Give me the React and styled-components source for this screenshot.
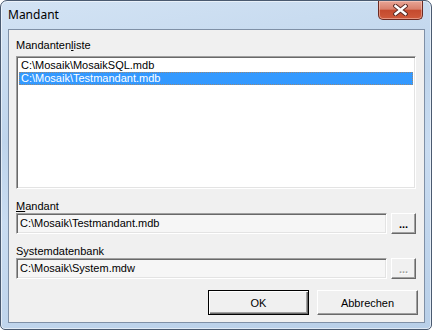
import React, { useState } from 'react';
import styled, { createGlobalStyle, css } from 'styled-components';

const GlobalStyle = createGlobalStyle`
  body {
    margin: 0;
    background: #ffffff;
    font-family: "Liberation Sans", Arial, sans-serif;
  }
`

const sunken = css`
  border: 1px solid;
  border-color: #a0a0a0 #ffffff #ffffff #a0a0a0;
  box-shadow: inset 1px 1px 0 #696969, inset -1px -1px 0 #e3e3e3;
`

const Window = styled.div`
  box-sizing: border-box;
  width: 432px;
  height: 330px;
  border: 1px solid #4a5a70;
  border-radius: 7px 7px 5px 5px;
  background: linear-gradient(170deg, #d3e3f4 0%, #bfd5ec 35%, #c9dcf1 55%, #b8cfe8 100%);
  box-shadow: inset 0 0 0 1px rgba(255, 255, 255, 0.55);
  display: flex;
  flex-direction: column;
  padding: 0 6px 6px 7px;
`

const TitleBar = styled.div`
  height: 28px;
  display: flex;
  align-items: flex-start;
`

const Title = styled.div`
  font-family: "Noto Sans", "Open Sans", sans-serif;
  font-size: 12px;
  line-height: 16px;
  padding-top: 6px;
  color: #000;
`

const CloseButton = styled.div`
  margin-left: auto;
  margin-right: 2px;
  width: 45px;
  height: 19px;
  box-sizing: border-box;
  border: 1px solid #6b2a22;
  border-top: none;
  border-radius: 0 0 5px 5px;
  background: linear-gradient(180deg, #e8a596 0%, #d9806c 45%, #c54a2e 52%, #cf5a3c 100%);
  box-shadow: inset 0 0 0 1px rgba(255, 220, 210, 0.45);
  display: flex;
  align-items: center;
  justify-content: center;
`

const Client = styled.div`
  flex: 1;
  background: #f0f0f0;
  border: 1px solid #7f90a6;
  display: flex;
  flex-direction: column;
  padding: 9px 8px 0 7px;
`

const Label = styled.div`
  font-size: 11px;
  line-height: 13px;
  height: 13px;
  color: #000;
  margin-top: ${props => props.gap || 0}px;
  margin-bottom: ${props => props.below || 0}px;
  u { text-decoration: underline; text-underline-offset: 1px; }
`

const ListBox = styled.div`
  box-sizing: border-box;
  height: 133px;
  background: #ffffff;
  ${sunken}
  padding: 2px 2px;
`

const Item = styled.div`
  font-size: 11px;
  line-height: 13px;
  height: 13px;
  padding-left: 2px;
  white-space: nowrap;
  color: ${props => props.selected ? '#ffffff' : '#000000'};
  background: ${props => props.selected ? '#3399ff' : 'transparent'};
  outline: ${props => props.selected ? '1px dotted rgba(190, 130, 70, 0.7)' : 'none'};
  outline-offset: -1px;
  cursor: default;
`

const FieldRow = styled.div`
  display: flex;
  gap: 4px;
`

const Field = styled.div`
  box-sizing: border-box;
  flex: 1;
  height: 21px;
  background: #f6f6f6;
  ${sunken}
  font-size: 11px;
  line-height: 19px;
  padding-left: 3px;
  color: #000;
  white-space: nowrap;
`

const raised = css`
  box-sizing: border-box;
  background: #f0f0f0;
  border: 1px solid;
  border-color: #ffffff #696969 #696969 #ffffff;
  box-shadow: inset -1px -1px 0 #a0a0a0;
  font-family: "Liberation Sans", Arial, sans-serif;
  font-size: 11px;
  color: #000;
  padding: 0;
  cursor: default;
`

const BrowseButton = styled.button`
  ${raised}
  width: 25px;
  height: 21px;
  font-weight: bold;
  line-height: 12px;
  color: ${props => props.disabled ? '#a0a0a0' : '#000'};
  text-shadow: ${props => props.disabled ? '1px 1px 0 #ffffff' : 'none'};
`

const ButtonRow = styled.div`
  display: flex;
  justify-content: flex-end;
  gap: 8px;
  margin-top: 11px;
  margin-right: -2px;
`

const DialogButton = styled.button`
  ${raised}
  width: 101px;
  height: 25px;
  ${props => props.isDefault && css`
    border: 1px solid #000;
    box-shadow: inset 1px 1px 0 #ffffff, inset -1px -1px 0 #696969, inset -2px -2px 0 #a0a0a0;
  `}
`

const CloseGlyph = () => (
  <svg width="15" height="12" viewBox="0 0 15 12">
    <path d="M2.5 2 L12.5 10 M12.5 2 L2.5 10" stroke="#5a2a24" strokeWidth="4.4" strokeLinecap="square" />
    <path d="M2.5 2 L12.5 10 M12.5 2 L2.5 10" stroke="#ffffff" strokeWidth="2.4" strokeLinecap="square" />
  </svg>
)

const entries = ['C:\\Mosaik\\MosaikSQL.mdb', 'C:\\Mosaik\\Testmandant.mdb']

export default function App() {
  const [selected, setSelected] = useState(1)

  return (
    <>
      <GlobalStyle />
      <Window>
        <TitleBar>
          <Title>Mandant</Title>
          <CloseButton><CloseGlyph /></CloseButton>
        </TitleBar>
        <Client>
          <Label below={4}>Mandanten<u>l</u>iste</Label>
          <ListBox>
            {entries.map((entry, i) => (
              <Item key={i} selected={i === selected} onClick={() => setSelected(i)}>{entry}</Item>
            ))}
          </ListBox>
          <Label gap={11}><u>M</u>andant</Label>
          <FieldRow>
            <Field>{entries[selected]}</Field>
            <BrowseButton>...</BrowseButton>
          </FieldRow>
          <Label gap={11}>Systemdatenbank</Label>
          <FieldRow>
            <Field>C:\Mosaik\System.mdw</Field>
            <BrowseButton disabled>...</BrowseButton>
          </FieldRow>
          <ButtonRow>
            <DialogButton isDefault>OK</DialogButton>
            <DialogButton>Abbrechen</DialogButton>
          </ButtonRow>
        </Client>
      </Window>
    </>
  )
}
